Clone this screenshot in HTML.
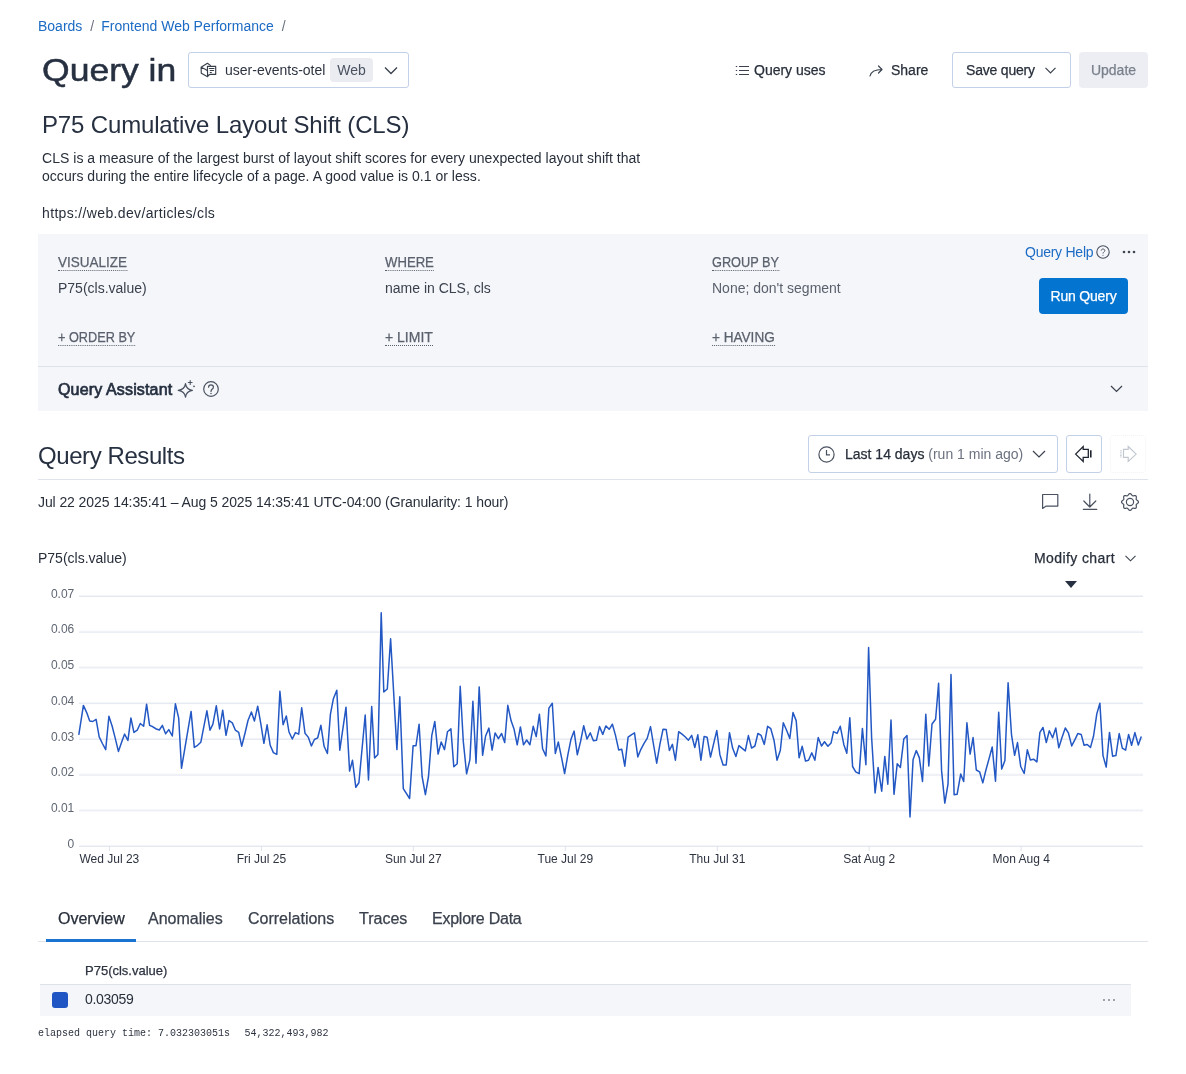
<!DOCTYPE html>
<html><head><meta charset="utf-8">
<style>
*{box-sizing:border-box;margin:0;padding:0}
html,body{width:1186px;height:1074px;overflow:hidden;background:#fff}
body{will-change:transform}
body{font-family:"Liberation Sans",sans-serif;color:#282f3b;position:relative}
.a{position:absolute;white-space:nowrap}
.t14{font-size:14px;line-height:16px}
.md{font-weight:normal;-webkit-text-stroke:0.25px currentColor}
.gr{color:#5a616d}
svg{position:absolute;overflow:visible}
</style></head>
<body>
<!-- breadcrumb -->
<div class="a t14" style="left:38px;top:18px;color:#1b6bc4">Boards<span style="color:#6b7280;margin:0 7px 0 8px">/</span>Frontend Web Performance<span style="color:#6b7280;margin:0 0 0 8px">/</span></div>

<!-- Query in -->
<div class="a" style="left:42px;top:50px;font-size:32px;line-height:40px;color:#263040;-webkit-text-stroke:0.5px #263040;transform:scaleX(1.11);transform-origin:0 0">Query in</div>
<div class="a" style="left:188px;top:52px;width:221px;height:36px;border:1px solid #c2d0e8;border-radius:3px"></div>
<svg style="left:196px;top:58px" width="28" height="24" viewBox="0 0 28 24" fill="none" stroke="#363d49" stroke-width="1.15" stroke-linecap="round" stroke-linejoin="round"><path d="M14.4 7.4 L11.45 5.3 L5.1 9.3 L5.3 15.35 L11.6 18.65 M5.1 9.3 L9.7 11.45 L11.2 12.6"/><path d="M11.45 8.4 H19.7 V16.4 H14.2 C13.2 16.4 12.4 17.4 11.6 18.4 Z" fill="#fff"/><path d="M13.3 10.4 H18.1 M14.2 12.4 H17.6 M14.2 14.4 H15.4" stroke-width="1.05"/></svg>
<div class="a t14" style="left:225px;top:62px;color:#2d3340">user-events-otel</div>
<div class="a t14" style="left:330px;top:58px;width:43px;height:24px;background:#eaecf1;border-radius:4px;color:#4a5260;text-align:center;line-height:24px">Web</div>
<svg style="left:384px;top:66px" width="14" height="9" viewBox="0 0 14 9" fill="none" stroke="#3a414d" stroke-width="1.3"><path d="M1 1.5 L7 7.5 L13 1.5"/></svg>

<!-- right buttons -->
<svg style="left:735px;top:65px" width="15" height="12" viewBox="0 0 15 12" fill="none" stroke="#3a414d" stroke-width="1"><path d="M0.8 1.5h1.4M0.8 5.5h1.4M0.8 9.5h1.4M4 1.5H14M4 5.5H14M4 9.5H14"/></svg>
<div class="a t14 md" style="left:754px;top:62px;">Query uses</div>
<svg style="left:869px;top:65px" width="15" height="12" viewBox="0 0 15 12" fill="none" stroke="#3a414d" stroke-width="1.2" stroke-linecap="round" stroke-linejoin="round"><path d="M1 11 C2 6 6 4.5 13 4.5 M9.5 1 L13 4.5 L9.5 8"/></svg>
<div class="a t14 md" style="left:891px;top:62px;">Share</div>
<div class="a" style="left:952px;top:52px;width:119px;height:36px;border:1px solid #c2d0e8;border-radius:3px"></div>
<div class="a t14 md" style="left:966px;top:62px;letter-spacing:-0.2px">Save query</div>
<svg style="left:1045px;top:67px" width="11" height="7" viewBox="0 0 11 7" fill="none" stroke="#3a414d" stroke-width="1.2"><path d="M0.5 0.8 L5.5 5.8 L10.5 0.8"/></svg>
<div class="a t14 md" style="left:1079px;top:52px;width:69px;height:36px;background:#eceef3;border-radius:4px;color:#7a808b;text-align:center;line-height:36px">Update</div>

<!-- title -->
<div class="a" style="left:42px;top:110.5px;font-size:24px;line-height:28px;letter-spacing:-0.15px;color:#263040">P75 Cumulative Layout Shift (CLS)</div>
<div class="a t14" style="left:42px;top:149px;line-height:18px;letter-spacing:0.03px">CLS is a measure of the largest burst of layout shift scores for every unexpected layout shift that<br>occurs during the entire lifecycle of a page. A good value is 0.1 or less.</div>
<div class="a t14" style="left:42px;top:205px;letter-spacing:0.35px">https://web.dev/articles/cls</div>

<!-- query builder -->
<div class="a" style="left:38px;top:234px;width:1110px;height:177px;background:#f5f6fa"></div>
<div class="a" style="left:38px;top:366px;width:1110px;height:1px;background:#dee2eb"></div>
<div class="a t14 md gr" style="left:58px;top:254px;border-bottom:1px dotted #5a616d;padding-bottom:0;transform:scaleX(0.964);transform-origin:0 0">VISUALIZE</div>
<div class="a t14 gr" style="left:58px;top:280px;color:#3a414d">P75(cls.value)</div>
<div class="a t14 md gr" style="left:58px;top:329px;border-bottom:1px dotted #5a616d;padding-bottom:0;transform:scaleX(0.908);transform-origin:0 0">+ ORDER BY</div>
<div class="a t14 md gr" style="left:385px;top:254px;border-bottom:1px dotted #5a616d;padding-bottom:0;transform:scaleX(0.938);transform-origin:0 0">WHERE</div>
<div class="a t14 gr" style="left:385px;top:280px;color:#3a414d">name in CLS, cls</div>
<div class="a t14 md gr" style="left:385px;top:329px;border-bottom:1px dotted #5a616d;padding-bottom:0">+ LIMIT</div>
<div class="a t14 md gr" style="left:712px;top:254px;border-bottom:1px dotted #5a616d;padding-bottom:0;transform:scaleX(0.91);transform-origin:0 0">GROUP BY</div>
<div class="a t14 gr" style="left:712px;top:280px;">None; don't segment</div>
<div class="a t14 md gr" style="left:712px;top:329px;border-bottom:1px dotted #5a616d;padding-bottom:0;transform:scaleX(0.97);transform-origin:0 0">+ HAVING</div>
<div class="a t14" style="left:1025px;top:244px;color:#1b6bc4;letter-spacing:-0.25px">Query Help</div>
<svg style="left:1096px;top:245px" width="14" height="14" viewBox="0 0 14 14" fill="none" stroke="#4a5260" stroke-width="1.1"><circle cx="7" cy="7" r="6.2"/><path d="M5.2 5.6 C5.2 3.5 8.8 3.5 8.8 5.6 C8.8 6.8 7 7 7 8.5" stroke-width="1"/><circle cx="7" cy="10.2" r="0.55" fill="#4a5260" stroke="none"/></svg>
<svg style="left:1122px;top:250px" width="14" height="4" viewBox="0 0 14 4" fill="#3f4652"><circle cx="2" cy="2" r="1.3"/><circle cx="7" cy="2" r="1.3"/><circle cx="12" cy="2" r="1.3"/></svg>
<div class="a t14 md" style="left:1039px;top:278px;width:89px;height:36px;background:#0474d1;border-radius:4px;color:#fff;text-align:center;line-height:36px;letter-spacing:-0.2px">Run Query</div>
<div class="a" style="left:58px;top:381px;font-size:16px;line-height:18px;font-weight:normal;-webkit-text-stroke:0.7px #263040;letter-spacing:0.15px;color:#263040">Query Assistant</div>
<svg style="left:174px;top:376px" width="48" height="24" viewBox="0 0 48 24" fill="none" stroke="#4a5260" stroke-width="1.2" stroke-linejoin="round" stroke-linecap="round"><path d="M11.5 7.7 Q12.3 13.6 18.4 14.4 Q12.3 15.2 11.5 21.2 Q10.7 15.2 4.2 14.4 Q10.7 13.6 11.5 7.7 Z"/><path d="M16.2 4.6 V8.4 M14.3 6.5 H18.1" stroke-width="1.1"/><circle cx="20" cy="10.3" r="0.9" fill="#4a5260" stroke="none"/><circle cx="37" cy="13" r="7.3"/><path d="M34.6 11.2 C34.6 8.2 39.4 8.2 39.4 11.2 C39.4 13 37 13.2 37 15.4"/><circle cx="37" cy="17.5" r="0.75" fill="#4a5260" stroke="none"/></svg>
<svg style="left:1110px;top:385px" width="13" height="8" viewBox="0 0 13 8" fill="none" stroke="#3a414d" stroke-width="1.2"><path d="M1 1 L6.5 6.5 L12 1"/></svg>

<!-- results -->
<div class="a" style="left:38px;top:441.5px;font-size:24px;line-height:28px;letter-spacing:-0.42px;color:#263040">Query Results</div>
<div class="a" style="left:808px;top:435px;width:250px;height:38px;border:1px solid #c2d0e8;border-radius:3px"></div>
<svg style="left:818px;top:446px" width="17" height="17" viewBox="0 0 17 17" fill="none" stroke="#4a5260" stroke-width="1.2"><circle cx="8.5" cy="8.5" r="7.6"/><path d="M8.5 4 V8.8 H12"/></svg>
<div class="a t14" style="left:845px;top:446px;"><span class="md">Last 14 days</span> <span style="color:#6b7280">(run 1 min ago)</span></div>
<svg style="left:1032px;top:450px" width="14" height="8" viewBox="0 0 14 8" fill="none" stroke="#3a414d" stroke-width="1.2"><path d="M1 1 L7 7 L13 1"/></svg>
<div class="a" style="left:1066px;top:435px;width:36px;height:38px;border:1px solid #c2d0e8;border-radius:3px"></div>
<svg style="left:1064px;top:440px" width="30" height="30" viewBox="0 0 30 30" fill="none" stroke="#1f2530" stroke-width="1.3" stroke-linejoin="miter"><path d="M11.6 14.1 L19.2 6.5 V9.4 H24.3 V17.4 H19.2 V21.4 Z"/><path d="M26.8 10.2 V17.4" stroke-width="1.6"/></svg>
<div class="a" style="left:1110px;top:435px;width:36px;height:38px;border:1px dotted #f1f3f6;border-radius:3px"></div>
<svg style="left:1110px;top:440px" width="30" height="30" viewBox="0 0 30 30" fill="none" stroke="#c3c8d0" stroke-width="1.2" stroke-linejoin="miter"><path d="M26.2 14.1 L18.2 6.5 V9.4 H13.5 V17.4 H18.2 V21.4 Z"/><path d="M10.9 10.2 V17.4" stroke-width="1.4" stroke-dasharray="1 0.6"/></svg>
<div class="a" style="left:38px;top:479px;width:1110px;height:1px;background:#dfe3ec"></div>
<div class="a t14" style="left:38px;top:494px;letter-spacing:-0.09px">Jul 22 2025 14:35:41 – Aug 5 2025 14:35:41 UTC-04:00 (Granularity: 1 hour)</div>
<svg style="left:1036px;top:488px" width="70" height="28" viewBox="0 0 70 28" fill="none" stroke="#4a5260" stroke-width="1.2" stroke-linejoin="round" stroke-linecap="round"><path d="M7 6.5 H21.8 V18.1 H10.2 L6.6 20.4 V6.5 Z"/><path d="M53.8 6 V19 M47.8 13 L53.8 19 L59.8 13 M47.3 21.3 H60.8"/></svg>
<svg style="left:1121px;top:493.4px" width="18" height="18" viewBox="0 0 18 18" fill="none" stroke="#4a5260" stroke-width="1.2"><path d="M17.45 9.00 L17.40 9.33 L17.26 9.65 L17.04 9.95 L16.77 10.23 L16.45 10.48 L16.13 10.71 L15.83 10.93 L15.57 11.14 L15.37 11.35 L15.24 11.58 L15.17 11.84 L15.16 12.14 L15.20 12.47 L15.26 12.83 L15.32 13.22 L15.36 13.62 L15.36 14.01 L15.30 14.38 L15.17 14.71 L14.98 14.98 L14.71 15.17 L14.38 15.30 L14.01 15.36 L13.62 15.36 L13.22 15.32 L12.83 15.26 L12.47 15.20 L12.14 15.16 L11.84 15.17 L11.58 15.24 L11.35 15.37 L11.14 15.57 L10.93 15.83 L10.71 16.13 L10.48 16.45 L10.23 16.77 L9.95 17.04 L9.65 17.26 L9.33 17.40 L9.00 17.45 L8.67 17.40 L8.35 17.26 L8.05 17.04 L7.77 16.77 L7.52 16.45 L7.29 16.13 L7.07 15.83 L6.86 15.57 L6.65 15.37 L6.42 15.24 L6.16 15.17 L5.86 15.16 L5.53 15.20 L5.17 15.26 L4.78 15.32 L4.38 15.36 L3.99 15.36 L3.62 15.30 L3.29 15.17 L3.02 14.98 L2.83 14.71 L2.70 14.38 L2.64 14.01 L2.64 13.62 L2.68 13.22 L2.74 12.83 L2.80 12.47 L2.84 12.14 L2.83 11.84 L2.76 11.58 L2.63 11.35 L2.43 11.14 L2.17 10.93 L1.87 10.71 L1.55 10.48 L1.23 10.23 L0.96 9.95 L0.74 9.65 L0.60 9.33 L0.55 9.00 L0.60 8.67 L0.74 8.35 L0.96 8.05 L1.23 7.77 L1.55 7.52 L1.87 7.29 L2.17 7.07 L2.43 6.86 L2.63 6.65 L2.76 6.42 L2.83 6.16 L2.84 5.86 L2.80 5.53 L2.74 5.17 L2.68 4.78 L2.64 4.38 L2.64 3.99 L2.70 3.62 L2.83 3.29 L3.02 3.02 L3.29 2.83 L3.62 2.70 L3.99 2.64 L4.38 2.64 L4.78 2.68 L5.17 2.74 L5.53 2.80 L5.86 2.84 L6.16 2.83 L6.42 2.76 L6.65 2.63 L6.86 2.43 L7.07 2.17 L7.29 1.87 L7.52 1.55 L7.77 1.23 L8.05 0.96 L8.35 0.74 L8.67 0.60 L9.00 0.55 L9.33 0.60 L9.65 0.74 L9.95 0.96 L10.23 1.23 L10.48 1.55 L10.71 1.87 L10.93 2.17 L11.14 2.43 L11.35 2.63 L11.58 2.76 L11.84 2.83 L12.14 2.84 L12.47 2.80 L12.83 2.74 L13.22 2.68 L13.62 2.64 L14.01 2.64 L14.38 2.70 L14.71 2.83 L14.98 3.02 L15.17 3.29 L15.30 3.62 L15.36 3.99 L15.36 4.38 L15.32 4.78 L15.26 5.17 L15.20 5.53 L15.16 5.86 L15.17 6.16 L15.24 6.42 L15.37 6.65 L15.57 6.86 L15.83 7.07 L16.13 7.29 L16.45 7.52 L16.77 7.77 L17.04 8.05 L17.26 8.35 L17.40 8.67 L17.45 9.00Z"/><circle cx="9" cy="9" r="3.6"/></svg>

<!-- chart header -->
<div class="a t14" style="left:38px;top:550px;">P75(cls.value)</div>
<div class="a t14 md" style="left:1034px;top:550px;letter-spacing:0.4px">Modify chart</div>
<svg style="left:1125px;top:555px" width="11" height="7" viewBox="0 0 11 7" fill="none" stroke="#3a414d" stroke-width="1.1"><path d="M0.5 0.8 L5.5 5.8 L10.5 0.8"/></svg>
<svg style="left:1065px;top:581px" width="12" height="7" viewBox="0 0 12 7"><path d="M0 0 H12 L6 7 Z" fill="#263040"/></svg>

<!-- CHART -->
<svg style="left:0;top:0" width="1186" height="1074" viewBox="0 0 1186 1074">
<line x1="79" y1="595.5" x2="1143" y2="595.5" stroke="#f3f4f8" stroke-width="1"/><line x1="79" y1="596.5" x2="1143" y2="596.5" stroke="#e4e8f1" stroke-width="1"/>
<line x1="79" y1="631.2" x2="1143" y2="631.2" stroke="#f3f4f8" stroke-width="1"/><line x1="79" y1="632.2" x2="1143" y2="632.2" stroke="#e4e8f1" stroke-width="1"/>
<line x1="79" y1="666.9" x2="1143" y2="666.9" stroke="#f3f4f8" stroke-width="1"/><line x1="79" y1="667.9" x2="1143" y2="667.9" stroke="#e4e8f1" stroke-width="1"/>
<line x1="79" y1="702.6" x2="1143" y2="702.6" stroke="#f3f4f8" stroke-width="1"/><line x1="79" y1="703.6" x2="1143" y2="703.6" stroke="#e4e8f1" stroke-width="1"/>
<line x1="79" y1="738.4" x2="1143" y2="738.4" stroke="#f3f4f8" stroke-width="1"/><line x1="79" y1="739.4" x2="1143" y2="739.4" stroke="#e4e8f1" stroke-width="1"/>
<line x1="79" y1="774.1" x2="1143" y2="774.1" stroke="#f3f4f8" stroke-width="1"/><line x1="79" y1="775.1" x2="1143" y2="775.1" stroke="#e4e8f1" stroke-width="1"/>
<line x1="79" y1="809.8" x2="1143" y2="809.8" stroke="#f3f4f8" stroke-width="1"/><line x1="79" y1="810.8" x2="1143" y2="810.8" stroke="#e4e8f1" stroke-width="1"/>
<line x1="79" y1="845.5" x2="1143" y2="845.5" stroke="#f3f4f8" stroke-width="1"/><line x1="79" y1="846.5" x2="1143" y2="846.5" stroke="#e4e8f1" stroke-width="1"/>
<text x="74.3" y="597.7" text-anchor="end" font-family="Liberation Sans" font-size="12" fill="#5f6672">0.07</text>
<text x="74.3" y="633.4" text-anchor="end" font-family="Liberation Sans" font-size="12" fill="#5f6672">0.06</text>
<text x="74.3" y="669.1" text-anchor="end" font-family="Liberation Sans" font-size="12" fill="#5f6672">0.05</text>
<text x="74.3" y="704.8" text-anchor="end" font-family="Liberation Sans" font-size="12" fill="#5f6672">0.04</text>
<text x="74.3" y="740.6" text-anchor="end" font-family="Liberation Sans" font-size="12" fill="#5f6672">0.03</text>
<text x="74.3" y="776.3" text-anchor="end" font-family="Liberation Sans" font-size="12" fill="#5f6672">0.02</text>
<text x="74.3" y="812.0" text-anchor="end" font-family="Liberation Sans" font-size="12" fill="#5f6672">0.01</text>
<text x="74.3" y="847.7" text-anchor="end" font-family="Liberation Sans" font-size="12" fill="#5f6672">0</text>
<line x1="109.4" y1="846" x2="109.4" y2="851" stroke="#dfe2ea" stroke-width="1"/>
<text x="109.4" y="862.7" text-anchor="middle" font-family="Liberation Sans" font-size="12" fill="#2d3340">Wed Jul 23</text>
<line x1="261.4" y1="846" x2="261.4" y2="851" stroke="#dfe2ea" stroke-width="1"/>
<text x="261.4" y="862.7" text-anchor="middle" font-family="Liberation Sans" font-size="12" fill="#2d3340">Fri Jul 25</text>
<line x1="413.3" y1="846" x2="413.3" y2="851" stroke="#dfe2ea" stroke-width="1"/>
<text x="413.3" y="862.7" text-anchor="middle" font-family="Liberation Sans" font-size="12" fill="#2d3340">Sun Jul 27</text>
<line x1="565.3" y1="846" x2="565.3" y2="851" stroke="#dfe2ea" stroke-width="1"/>
<text x="565.3" y="862.7" text-anchor="middle" font-family="Liberation Sans" font-size="12" fill="#2d3340">Tue Jul 29</text>
<line x1="717.3" y1="846" x2="717.3" y2="851" stroke="#dfe2ea" stroke-width="1"/>
<text x="717.3" y="862.7" text-anchor="middle" font-family="Liberation Sans" font-size="12" fill="#2d3340">Thu Jul 31</text>
<line x1="869.2" y1="846" x2="869.2" y2="851" stroke="#dfe2ea" stroke-width="1"/>
<text x="869.2" y="862.7" text-anchor="middle" font-family="Liberation Sans" font-size="12" fill="#2d3340">Sat Aug 2</text>
<line x1="1021.2" y1="846" x2="1021.2" y2="851" stroke="#dfe2ea" stroke-width="1"/>
<text x="1021.2" y="862.7" text-anchor="middle" font-family="Liberation Sans" font-size="12" fill="#2d3340">Mon Aug 4</text>
<polyline points="78.8,734.8 83.4,705.4 86.7,712.6 89.7,721.1 92.8,721.5 96.1,719.3 99.2,736.9 102.4,743.5 105.7,749.6 108.9,716.3 112.1,726.0 115.2,738.1 118.4,751.4 121.6,742.3 124.6,734.1 127.9,740.5 130.9,717.9 133.9,732.4 137.2,730.2 140.3,723.5 143.6,726.3 146.6,704.2 149.6,725.4 152.9,726.8 156.3,729.0 159.3,730.0 162.4,725.4 165.6,733.8 168.8,729.6 172.3,736.0 175.4,703.8 178.7,718.1 181.5,768.3 191.1,711.4 194.3,747.4 197.6,745.3 200.8,742.3 206.9,710.8 210.0,730.2 212.9,724.1 216.3,705.8 219.6,729.0 222.7,710.2 226.0,735.3 229.0,720.5 232.3,722.9 235.4,730.2 238.7,732.4 241.7,746.2 245.0,733.2 248.0,720.5 251.4,712.0 254.4,721.1 257.7,706.2 260.9,724.1 263.9,743.3 267.1,724.8 270.2,745.3 273.4,752.6 276.8,754.4 279.9,691.2 283.1,724.8 286.3,715.9 289.0,732.0 292.3,739.0 295.4,732.6 298.7,734.2 301.7,707.8 305.0,733.2 308.4,737.4 311.4,745.9 314.4,739.5 317.7,737.8 320.9,725.3 324.1,746.3 327.4,753.5 330.4,714.4 333.4,698.7 336.8,690.3 339.8,750.2 346.0,707.2 349.6,771.1 352.5,760.3 355.8,787.3 358.9,782.8 365.2,715.0 368.5,779.9 371.7,706.6 374.6,758.0 377.9,754.5 381.2,612.7 383.8,691.9 387.3,689.0 390.6,638.7 396.9,749.6 399.8,696.8 403.3,788.7 409.6,798.5 413.1,745.7 416.0,745.7 419.1,724.2 422.1,776.5 425.4,794.7 428.5,776.5 431.8,735.4 434.8,721.4 438.1,754.1 441.2,742.0 444.5,749.6 447.5,731.7 450.9,728.7 453.8,766.8 457.2,763.8 460.2,686.3 463.3,741.4 466.6,773.8 469.9,759.6 472.9,701.2 476.0,763.2 479.2,686.9 482.6,755.3 485.6,736.0 488.9,728.1 492.1,750.1 495.1,732.9 498.4,738.7 501.6,733.5 504.7,742.6 507.8,705.3 511.1,720.8 514.1,729.3 517.2,744.8 520.4,726.9 523.5,744.8 526.7,740.0 529.9,744.8 533.2,726.3 536.2,736.6 539.4,714.2 542.6,748.7 545.9,755.9 548.9,708.1 552.3,703.3 555.3,753.5 558.3,742.0 561.6,757.8 564.6,773.5 567.9,754.7 570.9,739.6 574.1,731.1 577.3,754.7 580.6,741.4 583.7,725.7 587.0,739.0 590.3,732.9 593.4,740.8 596.5,740.2 599.5,726.6 602.8,734.4 605.8,725.9 609.2,729.3 612.4,724.2 615.5,735.4 618.7,749.9 621.8,749.3 624.8,766.2 628.1,737.2 631.3,734.8 634.5,732.9 637.8,756.9 640.9,749.3 644.2,743.2 647.2,738.4 650.5,726.6 653.6,745.0 656.7,763.2 659.9,744.4 663.0,729.3 666.2,729.6 669.4,750.5 672.4,744.4 675.4,760.2 678.7,731.7 682.0,734.1 685.1,736.8 688.4,740.2 691.7,735.4 694.8,747.5 697.8,734.8 700.9,760.2 704.1,736.6 707.1,737.2 710.5,757.1 713.6,743.8 716.8,730.5 719.9,754.7 723.1,765.0 726.2,765.0 729.5,732.7 732.6,748.1 735.9,756.5 738.9,745.6 742.2,748.4 745.3,750.9 748.4,735.6 751.6,748.1 754.9,746.0 757.9,733.5 761.1,735.4 764.3,744.4 767.6,726.3 770.8,728.7 774.0,740.2 777.0,760.2 780.3,750.5 783.3,722.7 786.7,730.5 789.8,738.4 793.0,712.6 796.2,720.6 799.1,757.8 802.2,746.3 805.5,761.0 808.5,760.2 811.8,752.9 814.9,760.2 818.2,737.5 821.5,746.0 824.5,741.7 827.9,746.3 831.1,742.9 833.5,731.6 837.1,733.4 840.3,726.3 843.8,744.4 846.8,753.2 849.8,717.8 852.6,766.5 855.7,771.8 859.2,773.6 862.4,728.4 865.9,764.7 868.6,647.4 871.6,737.3 875.1,793.0 878.1,767.4 881.7,791.2 884.8,756.4 887.8,784.2 891.0,720.0 894.0,794.3 897.2,763.8 900.4,767.4 903.8,739.1 907.0,735.5 910.0,816.9 913.1,759.4 916.3,750.6 919.3,757.6 922.5,781.5 925.8,714.3 928.8,766.0 932.0,724.0 935.6,719.2 938.6,683.3 941.6,770.9 944.8,803.1 948.0,784.2 951.0,674.5 954.1,794.8 957.1,794.3 960.7,774.1 963.7,781.5 966.9,722.8 970.1,754.1 973.1,737.6 976.3,770.0 979.6,771.8 982.8,782.9 985.8,770.5 989.0,758.9 992.2,747.0 995.5,781.2 998.7,712.2 1001.7,769.1 1004.9,760.6 1008.1,682.8 1011.5,734.6 1014.6,755.3 1017.5,742.6 1020.7,766.5 1024.2,773.5 1027.3,749.8 1030.3,759.9 1033.6,759.2 1036.9,761.9 1039.9,732.4 1043.0,727.5 1046.3,742.5 1049.3,730.8 1052.6,737.7 1055.8,728.0 1058.8,747.8 1062.0,737.5 1065.3,728.0 1068.5,733.2 1071.7,745.9 1074.8,739.9 1077.8,733.6 1081.2,734.4 1084.1,745.3 1087.2,744.5 1090.5,747.4 1093.5,736.3 1096.8,713.9 1099.9,703.3 1103.0,755.6 1106.2,767.1 1109.5,732.4 1112.6,756.2 1115.9,755.6 1119.2,733.6 1122.3,748.1 1125.6,750.2 1128.6,734.4 1131.6,745.3 1134.9,732.6 1138.3,745.0 1141.3,736.5" fill="none" stroke="#2358c4" stroke-width="1.5" stroke-linejoin="round"/>
</svg>
<!-- /CHART -->

<!-- tabs -->
<div class="a md" style="left:58px;top:910px;font-size:16px;line-height:18px">Overview</div>
<div class="a md" style="left:148px;top:910px;font-size:16px;line-height:18px;color:#3a414d">Anomalies</div>
<div class="a md" style="left:248px;top:910px;font-size:16px;line-height:18px;color:#3a414d">Correlations</div>
<div class="a md" style="left:359px;top:910px;font-size:16px;line-height:18px;color:#3a414d">Traces</div>
<div class="a md" style="left:432px;top:910px;font-size:16px;line-height:18px;color:#3a414d;letter-spacing:-0.25px">Explore Data</div>
<div class="a" style="left:38px;top:941px;width:1110px;height:1px;background:#dee2eb"></div>
<div class="a" style="left:46px;top:939px;width:90px;height:3px;background:#1a73d0"></div>

<!-- table -->
<div class="a md" style="left:85px;top:963px;font-size:13px;line-height:15px;color:#2d3340">P75(cls.value)</div>
<div class="a" style="left:40px;top:984px;width:1091px;height:32px;background:#f5f6fa;border-top:1px solid #dee2eb"></div>
<div class="a" style="left:52px;top:992px;width:16px;height:16px;background:#1f56c4;border-radius:3px"></div>
<div class="a t14" style="left:85px;top:991px;letter-spacing:-0.3px">0.03059</div>
<svg style="left:1103px;top:999px" width="12" height="2" viewBox="0 0 12 2" fill="#9ea3ab" shape-rendering="crispEdges"><rect x="0" y="0" width="2" height="2"/><rect x="5" y="0" width="2" height="2"/><rect x="10" y="0" width="2" height="2"/></svg>
<div class="a" style="left:38px;top:1028px;font-family:'Liberation Mono',monospace;font-size:10px;line-height:12px;color:#2d3340">elapsed query time: 7.032303051s</div><div class="a" style="left:244.5px;top:1028px;font-family:'Liberation Mono',monospace;font-size:10px;line-height:12px;color:#2d3340">54,322,493,982</div>
</body></html>
